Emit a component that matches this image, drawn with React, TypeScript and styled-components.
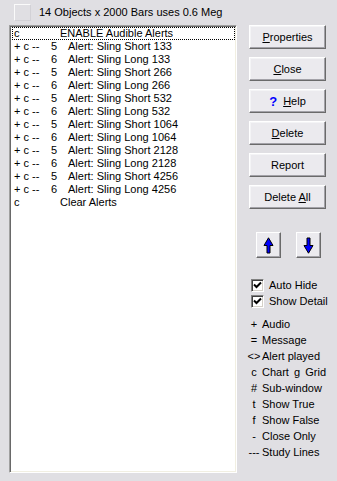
import React from "react";
import styled, { createGlobalStyle } from "styled-components";

const Global = createGlobalStyle`
  html, body { margin: 0; padding: 0; background: #e0dfe3; }
  body { font-family: "Liberation Sans", Arial, sans-serif; font-size: 11px; color: #000; }
`;

const Window = styled.div`
  width: 337px;
  height: 481px;
  background: #e0dfe3;
  display: flex;
  flex-direction: column;
  overflow: hidden;
`;

const Header = styled.div`
  height: 25px;
  display: flex;
  align-items: flex-start;
  padding-left: 14px;
  padding-top: 4px;
  box-sizing: border-box;
  gap: 8px;
`;

const StatusBox = styled.div`
  width: 17px;
  height: 17px;
  box-sizing: border-box;
  border: 1px solid #fafafa;
  border-right-color: #d2d1d6;
  border-bottom-color: #d2d1d6;
`;

const StatusText = styled.div`
  line-height: 17px;
  height: 17px;
  font-size: 11px;
`;

const Body = styled.div`
  display: flex;
  padding-left: 9px;
  gap: 12px;
`;

const List = styled.div`
  width: 228px;
  height: 448px;
  box-sizing: border-box;
  background: #fff;
  border-style: solid;
  border-width: 1px;
  border-color: #a0a0a0 #ffffff #ffffff #a0a0a0;
  box-shadow: inset 1px 1px 0 #696969, inset -1px -1px 0 #f1efe2;
  padding: 1px 1px 1px 2px;
`;

const Row = styled.div<{ $focus?: boolean }>`
  display: flex;
  height: 13px;
  line-height: 13px;
  padding-left: 2px;
  white-space: nowrap;
  outline: ${(p) => (p.$focus ? "1px dotted #000" : "none")};
  outline-offset: -1px;
`;

const Cell = styled.span<{ $w?: number }>`
  display: inline-block;
  width: ${(p) => (p.$w ? `${p.$w}px` : "auto")};
  flex: ${(p) => (p.$w ? "none" : "1")};
`;

const Side = styled.div`
  width: 77px;
  display: flex;
  flex-direction: column;
  white-space: nowrap;
`;

const Button = styled.div`
  width: 77px;
  height: 24px;
  box-sizing: border-box;
  background: #ebeaee;
  border-style: solid;
  border-width: 1px;
  border-color: #ffffff #6a6a6a #6a6a6a #ffffff;
  box-shadow: inset -1px -1px 0 #a3a2a8, inset 1px 1px 0 #f4f4f6;
  display: flex;
  align-items: center;
  justify-content: center;
  gap: 6px;
  margin-bottom: 8px;
  font-size: 11px;
  line-height: 13px;
`;

const Q = styled.span`
  color: #0000ff;
  font-weight: bold;
  font-size: 13px;
`;

const ArrowRow = styled.div`
  display: flex;
  gap: 15px;
  padding-left: 7px;
  margin-top: 15px;
`;

const ArrowButton = styled.div`
  width: 25px;
  height: 26px;
  box-sizing: border-box;
  background: #ebeaee;
  border-style: solid;
  border-width: 1px;
  border-color: #ffffff #6a6a6a #6a6a6a #ffffff;
  box-shadow: inset -1px -1px 0 #a3a2a8;
  display: flex;
  align-items: center;
  justify-content: center;
`;

const Checks = styled.div`
  margin-top: 19px;
  padding-left: 2px;
  display: flex;
  flex-direction: column;
`;

const CheckRow = styled.div`
  height: 16px;
  display: flex;
  align-items: center;
  gap: 5px;
  white-space: nowrap;
`;

const Box = styled.div`
  width: 13px;
  height: 13px;
  flex: none;
  box-sizing: border-box;
  background: #fff;
  border-style: solid;
  border-width: 1px;
  border-color: #808080 #ffffff #ffffff #808080;
  box-shadow: inset 1px 1px 0 #404040, inset -1px -1px 0 #d4d0c8;
  display: flex;
  align-items: center;
  justify-content: center;
`;

const Legend = styled.div`
  margin-top: 7px;
  display: flex;
  flex-direction: column;
  margin-left: -2px;
`;

const LegendRow = styled.div`
  height: 16px;
  line-height: 16px;
  display: flex;
  white-space: nowrap;
`;

const Sym = styled.span`
  width: 14px;
  flex: none;
  display: flex;
  justify-content: center;
  margin-right: 1px;
`;

const Gap = styled.span`
  display: inline-block;
  width: 7px;
`;

const Arrow = ({ down }: { down?: boolean }) => (
  <svg width="11" height="17" viewBox="0 0 11 17">
    <path
      d="M5.5 0.8 L10 8.5 L7 8.5 L7 16 L4 16 L4 8.5 L1 8.5 Z"
      fill="#0000ff"
      stroke="#000"
      strokeWidth="1"
      strokeLinejoin="miter"
      transform={down ? "rotate(180 5.5 8.5)" : undefined}
    />
  </svg>
);

const Tick = () => (
  <svg width="9" height="9" viewBox="0 0 9 9">
    <path d="M1 3.5 L3.5 6 L8 1.5" fill="none" stroke="#000" strokeWidth="2" />
  </svg>
);

const alerts = [
  ["5", "Alert: Sling Short 133"],
  ["6", "Alert: Sling Long 133"],
  ["5", "Alert: Sling Short 266"],
  ["6", "Alert: Sling Long 266"],
  ["5", "Alert: Sling Short 532"],
  ["6", "Alert: Sling Long 532"],
  ["5", "Alert: Sling Short 1064"],
  ["6", "Alert: Sling Long 1064"],
  ["5", "Alert: Sling Short 2128"],
  ["6", "Alert: Sling Long 2128"],
  ["5", "Alert: Sling Short 4256"],
  ["6", "Alert: Sling Long 4256"],
];

export default function App() {
  return (
    <Window>
      <Global />
      <Header>
        <StatusBox />
        <StatusText>14 Objects x 2000 Bars uses 0.6 Meg</StatusText>
      </Header>
      <Body>
        <List>
          <Row $focus>
            <Cell $w={46}>c</Cell>
            <Cell>ENABLE Audible Alerts</Cell>
          </Row>
          {alerts.map(([n, t], i) => (
            <Row key={i}>
              <Cell $w={37}>+ c --</Cell>
              <Cell $w={17}>{n}</Cell>
              <Cell>{t}</Cell>
            </Row>
          ))}
          <Row>
            <Cell $w={46}>c</Cell>
            <Cell>Clear Alerts</Cell>
          </Row>
        </List>
        <Side>
          <Button>
            <span><u>P</u>roperties</span>
          </Button>
          <Button>
            <span><u>C</u>lose</span>
          </Button>
          <Button>
            <Q>?</Q>
            <span><u>H</u>elp</span>
          </Button>
          <Button>
            <span><u>D</u>elete</span>
          </Button>
          <Button>
            <span>Report</span>
          </Button>
          <Button>
            <span>Delete <u>A</u>ll</span>
          </Button>
          <ArrowRow>
            <ArrowButton>
              <Arrow />
            </ArrowButton>
            <ArrowButton>
              <Arrow down />
            </ArrowButton>
          </ArrowRow>
          <Checks>
            <CheckRow>
              <Box><Tick /></Box>
              <span>Auto Hide</span>
            </CheckRow>
            <CheckRow>
              <Box><Tick /></Box>
              <span>Show Detail</span>
            </CheckRow>
          </Checks>
          <Legend>
            <LegendRow><Sym>+</Sym>Audio</LegendRow>
            <LegendRow><Sym>=</Sym>Message</LegendRow>
            <LegendRow><Sym>&lt;&gt;</Sym>Alert played</LegendRow>
            <LegendRow><Sym>c</Sym>Chart<Gap />g<Gap />Grid</LegendRow>
            <LegendRow><Sym>#</Sym>Sub-window</LegendRow>
            <LegendRow><Sym>t</Sym>Show True</LegendRow>
            <LegendRow><Sym>f</Sym>Show False</LegendRow>
            <LegendRow><Sym>-</Sym>Close Only</LegendRow>
            <LegendRow><Sym>---</Sym>Study Lines</LegendRow>
          </Legend>
        </Side>
      </Body>
    </Window>
  );
}
